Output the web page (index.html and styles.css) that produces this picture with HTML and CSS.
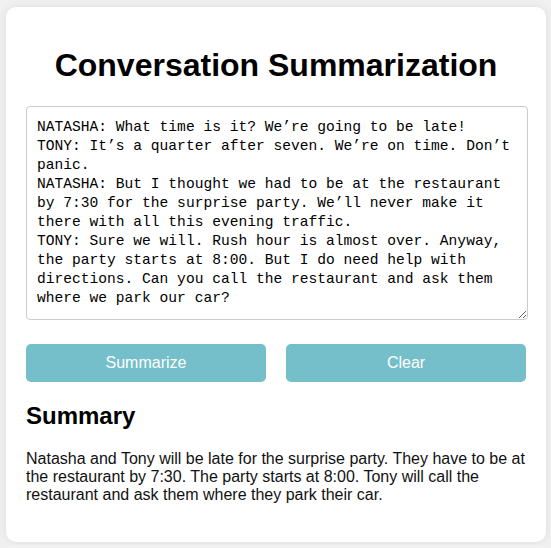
FILE: index.html
```html
<!DOCTYPE html>
<html lang="en">
<head>
<meta charset="utf-8">
<title>Conversation Summarization</title>
<link rel="stylesheet" href="styles.css">
</head>
<body>
<div class="card">
  <h1 class="title">Conversation Summarization</h1>
  <textarea class="conversation">NATASHA: What time is it? We’re going to be late!
TONY: It’s a quarter after seven. We’re on time. Don’t panic.
NATASHA: But I thought we had to be at the restaurant by 7:30 for the surprise party. We’ll never make it there with all this evening traffic.
TONY: Sure we will. Rush hour is almost over. Anyway, the party starts at 8:00. But I do need help with directions. Can you call the restaurant and ask them where we park our car?</textarea>
  <div class="actions">
    <button class="btn">Summarize</button>
    <button class="btn">Clear</button>
  </div>
  <h2 class="subtitle">Summary</h2>
  <p class="summary">Natasha and Tony will be late for the surprise party. They have to be at the restaurant by 7:30. The party starts at 8:00. Tony will call the restaurant and ask them where they park their car.</p>
</div>
</body>
</html>
```
FILE: styles.css
```css
html, body {
  margin: 0;
  padding: 0;
}
body {
  background: #f0f0f0;
  font-family: "Liberation Sans", Arial, sans-serif;
  padding: 7px 5px 3px 6px;
}
.card {
  background: #fff;
  border-radius: 10px;
  box-shadow: 0 0 8px rgba(0, 0, 0, 0.08);
  padding: 20px 20px 22px;
  width: 500px;
}
.title {
  font-size: 32px;
  font-weight: bold;
  text-align: center;
  margin: 20px 0 22px;
  color: #000;
}
.conversation {
  display: block;
  box-sizing: border-box;
  width: 502px;
  height: 214px;
  margin: 0 0 24px;
  padding: 11px 10px 10px;
  border: 1px solid #cccccc;
  border-radius: 4px;
  font-family: "Liberation Mono", "DejaVu Sans Mono", monospace;
  font-size: 14.6px;
  line-height: 19px;
  color: #000;
  resize: vertical;
  overflow: hidden;
}
.actions {
  display: flex;
  gap: 20px;
}
.btn {
  flex: 1;
  height: 38px;
  border: none;
  border-radius: 5px;
  background: #74bfc9;
  color: #fff;
  font-family: "Liberation Sans", Arial, sans-serif;
  font-size: 16px;
  padding: 0;
}
.subtitle {
  font-size: 24px;
  font-weight: bold;
  margin: 20px 0 20px;
  color: #000;
}
.summary {
  font-size: 16px;
  margin: 0 0 16px;
  color: #111;
}
```
